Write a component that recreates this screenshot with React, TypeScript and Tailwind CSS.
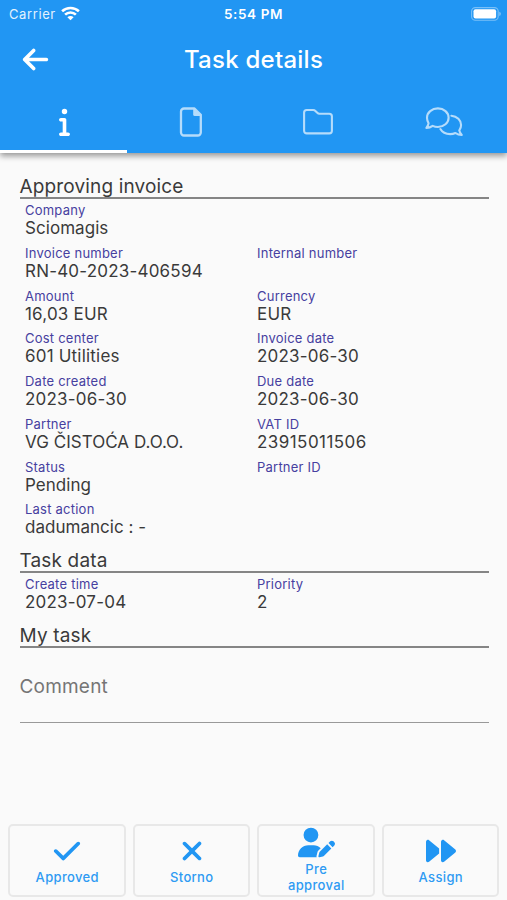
import type { ReactNode } from "react"
import { FaArrowLeft, FaCheck, FaForward, FaInfo, FaUserPen, FaXmark } from "react-icons/fa6"

interface Field {
  label: string
  value?: string
  valueClass?: string
}

const invoiceRows: Field[][] = [
  [{ label: "Company", value: "Sciomagis", valueClass: "tracking-[0.05px]" }],
  [{ label: "Invoice number", value: "RN-40-2023-406594" }, { label: "Internal number" }],
  [{ label: "Amount", value: "16,03 EUR" }, { label: "Currency", value: "EUR" }],
  [{ label: "Cost center", value: "601 Utilities" }, { label: "Invoice date", value: "2023-06-30" }],
  [{ label: "Date created", value: "2023-06-30" }, { label: "Due date", value: "2023-06-30" }],
  [
    { label: "Partner", value: "VG ČISTOĆA D.O.O.", valueClass: "tracking-[0.03px]" },
    { label: "VAT ID", value: "23915011506", valueClass: "tracking-[0.45px]" },
  ],
  [{ label: "Status", value: "Pending", valueClass: "tracking-[0.05px]" }, { label: "Partner ID" }],
  [{ label: "Last action", value: "dadumancic : -", valueClass: "tracking-[0.03px]" }],
]

const taskRows: Field[][] = [
  [{ label: "Create time", value: "2023-07-04" }, { label: "Priority", value: "2" }],
]

function WifiIcon() {
  return (
    <svg width="19" height="15" viewBox="0 0 19 15" fill="none" stroke="currentColor" strokeWidth="2.6">
      <path d="M1.1 5.3C5.8.9 13.2.9 17.9 5.3" />
      <path d="M4.1 8.7C7.1 5.7 11.9 5.7 14.9 8.7" />
      <path d="M9.5 14.2 6.4 11.2C8.2 9.6 10.8 9.6 12.6 11.2Z" fill="currentColor" stroke="none" />
    </svg>
  )
}

function BatteryIcon() {
  return (
    <svg width="31" height="14" viewBox="0 0 31 14" fill="none">
      <rect x=".6" y=".6" width="26.6" height="12.6" rx="3.8" stroke="white" strokeOpacity=".4" strokeWidth="1.1" />
      <rect x="2.5" y="2.3" width="22.6" height="9.2" rx="2" fill="white" />
      <path d="M28.4 4.8c1.8.6 1.8 3.6 0 4.2Z" fill="white" fillOpacity=".5" />
    </svg>
  )
}

function FileIcon() {
  return (
    <svg width="24" height="32" viewBox="0 0 24 32" fill="none" stroke="currentColor" strokeWidth="2.3" strokeLinejoin="round">
      <path d="M5 2.5h10.5L21.8 8.8V26.5a3 3 0 0 1-3 3H5a3 3 0 0 1-3-3V5.5a3 3 0 0 1 3-3Z" />
      <path d="M14.2 2.5v6a1.5 1.5 0 0 0 1.5 1.5h6.1V8.7L15.6 2.5Z" fill="currentColor" stroke="none" />
    </svg>
  )
}

function FolderIcon() {
  return (
    <svg width="32" height="28" viewBox="0 0 32 28" fill="none" stroke="currentColor" strokeWidth="2.1" strokeLinejoin="round">
      <path d="M4.7 2H11.2c.9 0 1.6.3 2.2.9l1.9 1.9c.6.6 1.3.9 2.1.9h9.9a2.6 2.6 0 0 1 2.6 2.6v14.5a2.6 2.6 0 0 1-2.6 2.6H4.7a2.6 2.6 0 0 1-2.6-2.6V4.6A2.6 2.6 0 0 1 4.7 2Z" />
    </svg>
  )
}

function CommentsIcon() {
  return (
    <svg width="38" height="32" viewBox="0 0 38 32" fill="none" stroke="currentColor" strokeWidth="2.1" strokeLinecap="round" strokeLinejoin="round">
      <path d="M12.9 2.4C18.9 2.4 23.6 6.5 23.6 11.7S18.9 21 12.9 21c-1.9 0-3.7-.4-5.2-1.1-1.7 1.2-3.9 2-6.3 2 1-1.3 1.9-2.8 2.2-4.7C2.6 15.6 2 13.7 2 11.7 2 6.5 6.9 2.4 12.9 2.4Z" />
      <path d="M26.4 9.7c5.7.6 9.7 4.5 9.7 9.3 0 2-.7 3.9-1.8 5.4.4 1.8 1.3 3.2 2.4 4.6-2.5 0-4.6-.8-6.3-2-1.6.7-3.3 1.1-5.2 1.1-4.5 0-8.1-2-9.8-5" />
    </svg>
  )
}

function Tab({ active, children }: { active?: boolean; children: ReactNode }) {
  return (
    <button
      className={`flex h-full flex-1 items-center justify-center border-b-[3px] pl-[1.5px] ${
        active ? "border-white text-white" : "border-transparent text-[#b5dcfb]"
      }`}
    >
      {children}
    </button>
  )
}

function Heading({ children }: { children: ReactNode }) {
  return (
    <h2 className="flex h-8 items-end border-b-2 border-[#858585] text-[19px] leading-[20px] tracking-[0.15px]">
      {children}
    </h2>
  )
}

function FieldRows({ rows }: { rows: Field[][] }) {
  return (
    <>
      {rows.map((row) => (
        <div key={row[0].label} className="grid h-[42.75px] grid-cols-[232px_1fr] pl-[5.5px] pt-[3px]">
          {row.map((field) => (
            <div key={field.label}>
              <p className="text-[13px] leading-4 tracking-[0.23px] text-[#4640a0]">{field.label}</p>
              <p className={`text-[17px] leading-[21px] ${field.valueClass ?? "tracking-[0.2px]"}`}>{field.value}</p>
            </div>
          ))}
        </div>
      ))}
    </>
  )
}

function ActionButton({ icon, label }: { icon: ReactNode; label: string }) {
  return (
    <button className="flex h-[73px] flex-col items-center justify-center rounded-[5px] border-2 border-[#e8e8e8] pb-px pl-[25px] pr-6 text-[13px] font-medium leading-4 tracking-[0.35px] text-[#2e9bf3]">
      <span className="flex h-[34px] items-center text-[#2196f3]">{icon}</span>
      <span>{label}</span>
    </button>
  )
}

export default function App() {
  return (
    <div className="flex h-[900px] w-[507px] flex-col overflow-hidden bg-[#fafafa] font-['Inter',sans-serif] text-[#3a3a3a]">
      <header className="flex h-[153px] shrink-0 flex-col bg-[#2196f3] text-white shadow-[0_3px_6px_rgba(0,0,0,0.4)]">
        <div className="grid h-[27px] grid-cols-3 items-center pl-[9px] pr-[5px] text-[13px]">
          <div className="flex items-center gap-[5px] pt-0.5 tracking-[0.6px] text-[#e3f2fe]">
            Carrier
            <span className="pb-0.5 text-white">
              <WifiIcon />
            </span>
          </div>
          <div className="pr-1 pt-0.5 text-center text-[13.5px] font-semibold tracking-[0.6px]">5:54 PM</div>
          <div className="flex justify-end">
            <BatteryIcon />
          </div>
        </div>
        <div className="grid h-[66px] grid-cols-[80px_1fr_80px] items-center">
          <button className="pb-0.5 pl-[20.5px]">
            <FaArrowLeft size={29} />
          </button>
          <h1 className="text-center text-[24px] font-medium tracking-[0.25px]">Task details</h1>
        </div>
        <nav className="flex flex-1">
          <Tab active>
            <FaInfo size={29} />
          </Tab>
          <Tab>
            <FileIcon />
          </Tab>
          <Tab>
            <FolderIcon />
          </Tab>
          <Tab>
            <CommentsIcon />
          </Tab>
        </nav>
      </header>

      <main className="flex-1 pl-[19.5px] pr-[18.5px] pt-[14px]">
        <Heading>Approving invoice</Heading>
        <FieldRows rows={invoiceRows} />
        <Heading>Task data</Heading>
        <FieldRows rows={taskRows} />
        <Heading>My task</Heading>
        <div className="h-[75px] border-b border-[#999] pt-[27px] text-[19px] leading-6 tracking-[0.2px] text-[#757575]">
          Comment
        </div>
      </main>

      <footer className="grid shrink-0 grid-cols-4 gap-[7px] px-2 pb-[3px]">
        <ActionButton icon={<FaCheck size={30} className="-mt-[3px]" />} label="Approved" />
        <ActionButton icon={<FaXmark size={30} className="-mt-[3px]" />} label="Storno" />
        <ActionButton icon={<FaUserPen size={37} className="-mt-[3px]" />} label="Pre approval" />
        <ActionButton icon={<FaForward size={30} className="-mt-[3px]" />} label="Assign" />
      </footer>
    </div>
  )
}
